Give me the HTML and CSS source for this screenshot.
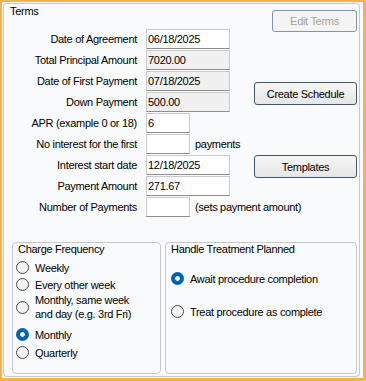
FILE: index.html
```html
<!DOCTYPE html>
<html lang="en">
<head>
    <meta charset="UTF-8">
    <meta name="viewport" content="width=device-width, initial-scale=1.0">
    <title>Payment Plan Terms</title>
    <link rel="stylesheet" href="styles.css">
</head>
<body>
    <div class="window">
        <section class="group terms">
            <div class="terms-top">
                <div class="terms-main">
                    <div class="group-title terms-title">Terms</div>
                    <div class="form">
                        <label>Date of Agreement</label>
                        <div class="cell"><input class="field" type="text" value="06/18/2025"></div>

                        <label>Total Principal Amount</label>
                        <div class="cell"><input class="field locked" type="text" value="7020.00" readonly></div>

                        <label>Date of First Payment</label>
                        <div class="cell"><input class="field locked" type="text" value="07/18/2025" readonly></div>

                        <label>Down Payment</label>
                        <div class="cell"><input class="field locked" type="text" value="500.00" readonly></div>

                        <label>APR (example 0 or 18)</label>
                        <div class="cell"><input class="field short" type="text" value="6"></div>

                        <label>No interest for the first</label>
                        <div class="cell"><input class="field short" type="text" value=""><span>payments</span></div>

                        <label>Interest start date</label>
                        <div class="cell"><input class="field" type="text" value="12/18/2025"></div>

                        <label>Payment Amount</label>
                        <div class="cell"><input class="field" type="text" value="271.67"></div>

                        <label>Number of Payments</label>
                        <div class="cell"><input class="field short" type="text" value=""><span>(sets payment amount)</span></div>
                    </div>
                </div>
                <div class="actions">
                    <button class="btn btn-edit" disabled>Edit Terms</button>
                    <button class="btn btn-wide btn-schedule">Create Schedule</button>
                    <button class="btn btn-wide btn-templates">Templates</button>
                </div>
            </div>

            <div class="groups">
                <section class="group freq">
                    <div class="group-title">Charge Frequency</div>
                    <label class="option opt-weekly"><input type="radio" name="freq"><span>Weekly</span></label>
                    <label class="option"><input type="radio" name="freq"><span>Every other week</span></label>
                    <label class="option option-tall"><input type="radio" name="freq"><span>Monthly, same week<br>and day (e.g. 3rd Fri)</span></label>
                    <label class="option opt-monthly"><input type="radio" name="freq" checked><span>Monthly</span></label>
                    <label class="option opt-quarterly"><input type="radio" name="freq"><span>Quarterly</span></label>
                </section>
                <section class="group handle">
                    <div class="group-title">Handle Treatment Planned</div>
                    <label class="option opt-await"><input type="radio" name="handle" checked><span>Await procedure completion</span></label>
                    <label class="option opt-treat"><input type="radio" name="handle"><span>Treat procedure as complete</span></label>
                </section>
            </div>
        </section>
    </div>
</body>
</html>
```
FILE: styles.css
```css
body {
    margin: 0;
    font-family: "Liberation Sans", Arial, sans-serif;
    font-size: 11px;
    letter-spacing: -0.3px;
    color: #000;
    background-color: #f9fafc;
}
.window {
    width: 366px;
    height: 381px;
    box-sizing: border-box;
    border: solid #f6b344;
    border-width: 2px 3px 3px 2px;
    padding: 1px 3px 1px 1px;
    background-color: #f9fafc;
}
.group {
    box-sizing: border-box;
    border: 1px solid #c6c8ca;
    border-radius: 4px;
}
.group-title {
    height: 13px;
    line-height: 13px;
    white-space: nowrap;
}
.terms {
    height: 100%;
    display: flex;
    flex-direction: column;
    padding: 0 2px 2px 0;
}
/* form and buttons share one cell; the buttons sit at the right */
.terms-top {
    display: grid;
}
.terms-main,
.actions {
    grid-area: 1 / 1;
}
.terms-title {
    padding: 1px 0 0 6px;
}
.form {
    display: grid;
    grid-template-columns: 134px auto;
    justify-content: start;
    column-gap: 8px;
    row-gap: 1px;
    margin-top: 11px;
}
.form label {
    text-align: right;
    line-height: 20px;
    padding-right: 1px;
    white-space: nowrap;
}
.cell {
    display: flex;
    align-items: center;
    gap: 5px;
    white-space: nowrap;
}
.field {
    width: 84px;
    height: 20px;
    box-sizing: border-box;
    margin: 0;
    padding: 0 1px;
    border: 1px solid #cacaca;
    border-bottom-color: #8d8d8d;
    background: #fff;
    font: inherit;
    letter-spacing: inherit;
    color: #000;
    outline: none;
}
.field.short {
    width: 44px;
}
.field.locked {
    background: #f0f0f0;
}
.actions {
    justify-self: end;
    display: flex;
    flex-direction: column;
    align-items: flex-end;
    padding-top: 6px;
}
.btn {
    box-sizing: border-box;
    margin: 0;
    padding: 0;
    font: inherit;
    letter-spacing: inherit;
    color: #000;
    border: 1px solid #3e5873;
    border-radius: 3px;
    background: linear-gradient(#f6f6f6, #e6e6e6);
}
.btn-edit {
    width: 85px;
    height: 22px;
    color: #a2a2a2;
    border-color: #7f95ab;
    background: #f4f4f4;
}
.btn-wide {
    width: 103px;
    height: 23px;
}
.btn-schedule {
    margin-top: 50px;
}
.btn-templates {
    margin-top: 50px;
}
.groups {
    display: flex;
    gap: 4px;
    margin-top: auto;
    padding-left: 8px;
    height: 132px;
}
.freq {
    width: 149px;
    padding-left: 3px;
}
.freq .group-title {
    padding-left: 2px;
}
.handle {
    width: 192px;
    padding-left: 5px;
}
.option {
    display: flex;
    align-items: center;
    gap: 6px;
    height: 17px;
    white-space: nowrap;
}
.option span {
    line-height: 14px;
}
.option-tall {
    height: 28px;
}
.opt-weekly {
    margin-top: 3px;
}
.opt-monthly {
    margin-top: 5px;
}
.opt-quarterly {
    margin-top: 1px;
}
.opt-await {
    margin-top: 14px;
}
.opt-treat {
    margin-top: 16px;
}
.option input {
    appearance: none;
    flex: none;
    width: 13px;
    height: 13px;
    margin: 0;
    box-sizing: border-box;
    border: 1px solid #4a4a4a;
    border-radius: 50%;
    background: #f3f3f3;
}
.option input:checked {
    border: none;
    background: radial-gradient(circle, #fff 0 2px, #0062b3 2.7px);
}
```
